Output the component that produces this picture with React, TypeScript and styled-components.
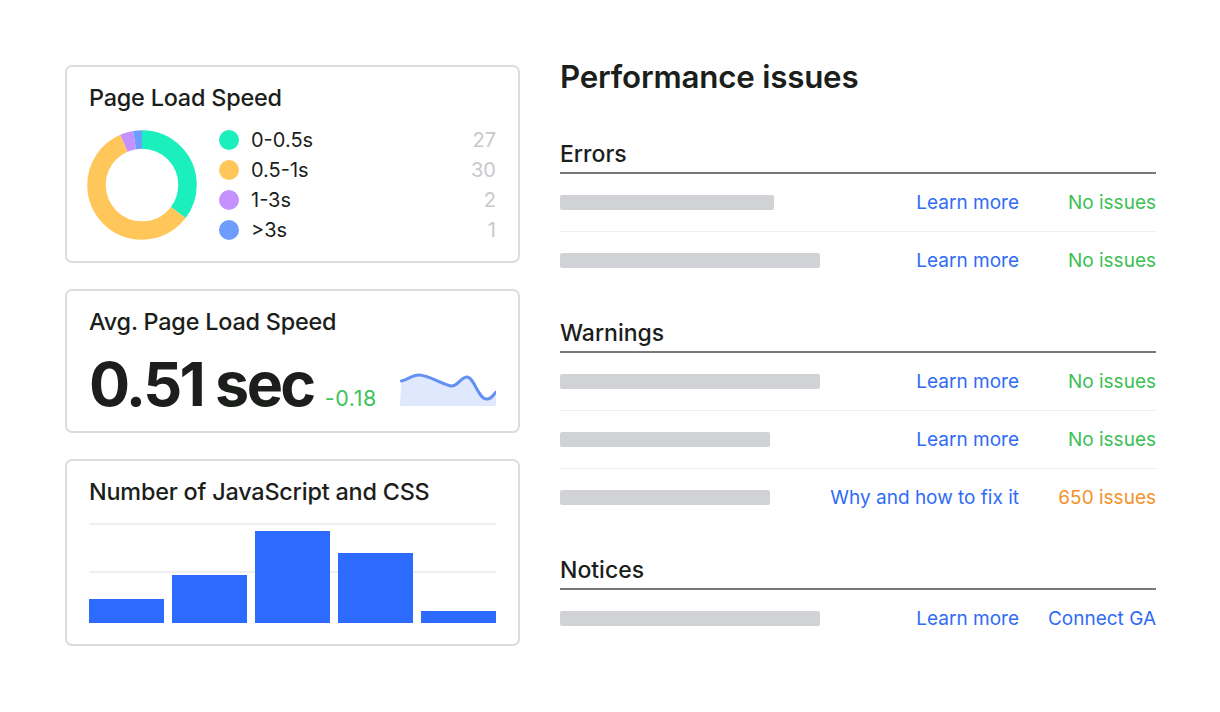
import React, { FC } from 'react';
import styled, { createGlobalStyle } from 'styled-components';

const GlobalStyle = createGlobalStyle`
  * { box-sizing: border-box; }
  body {
    margin: 0;
    background: #fff;
    font-family: Inter, "Noto Sans", "Liberation Sans", sans-serif;
    color: #1b1e1b;
  }
`;

const Page = styled.div`
  display: flex;
  align-items: flex-start;
  gap: 40px;
  padding: 65px 64px 0 65px;
`;

const LeftColumn = styled.div`
  width: 455px;
  display: flex;
  flex-direction: column;
  gap: 26px;
`;

const Card = styled.section<{ $bottom?: number }>`
  border: 2px solid #dcdcdf;
  border-radius: 7px;
  padding: 17px 22px ${(p) => p.$bottom ?? 17}px;
`;

const CardTitle = styled.h2`
  margin: 0;
  font-size: 23.4px;
  line-height: 28px;
  font-weight: 500;
  letter-spacing: -0.2px;
`;

const SpeedBody = styled.div`
  margin-top: 13px;
  height: 120px;
  display: flex;
  align-items: center;
  gap: 22px;
  margin-left: -2px;
`;

const Legend = styled.ul`
  flex: 1;
  margin: 0;
  padding: 0;
  list-style: none;
`;

const LegendRow = styled.li`
  height: 30px;
  display: flex;
  align-items: center;
  gap: 12px;
  font-size: 20px;
`;

const Dot = styled.span<{ $color: string }>`
  width: 20px;
  height: 20px;
  border-radius: 50%;
  background: ${(p) => p.$color};
`;

const LegendCount = styled.span`
  margin-left: auto;
  color: #c9c9cb;
`;

const ValueRow = styled.div`
  margin-top: 18px;
  height: 60px;
  display: flex;
  align-items: baseline;
`;

const BigValue = styled.span`
  font-size: 61px;
  line-height: 60px;
  font-weight: 700;
  letter-spacing: -2.6px;
`;

const Delta = styled.span`
  margin-left: 11px;
  font-size: 21.5px;
  font-weight: 400;
  letter-spacing: 0.6px;
  color: #3ec45c;
`;

const Spark = styled.svg`
  margin-left: auto;
  display: block;
`;

const Chart = styled.div`
  margin-top: 17px;
  height: 100px;
  display: flex;
  align-items: flex-end;
  gap: 8px;
  background:
    linear-gradient(#f0f0f2, #f0f0f2) 0 0 / 100% 2px no-repeat,
    linear-gradient(#f0f0f2, #f0f0f2) 0 48px / 100% 2px no-repeat;
`;

const Bar = styled.div`
  flex: 1;
  background: #2d6bff;
`;

const RightColumn = styled.div`
  flex: 1;
  display: flex;
  flex-direction: column;
  gap: 30px;
`;

const Title = styled.h1`
  margin: 0 0 21px;
  font-size: 31.3px;
  line-height: 24px;
  font-weight: 600;
  letter-spacing: -0.2px;
`;

const Section = styled.div``;

const SectionHeader = styled.h3`
  margin: 0;
  font-size: 23px;
  line-height: 28px;
  font-weight: 500;
  padding-bottom: 4px;
  border-bottom: 2px solid #77787a;
`;

const Row = styled.div`
  box-sizing: content-box;
  height: 57px;
  display: grid;
  grid-template-columns: 1fr auto 137px;
  align-items: center;
  border-bottom: 1px solid #efeff1;
  font-size: 19px;
  &:last-child {
    border-bottom: none;
  }
`;

const Placeholder = styled.div<{ $w: number }>`
  width: ${(p) => p.$w}px;
  height: 15px;
  border-radius: 2px;
  background: #d1d2d5;
`;

const Link = styled.a`
  color: #2f6cf6;
  text-decoration: none;
  text-align: right;
`;

const Status = styled.span<{ $tone: 'ok' | 'warn' | 'link' }>`
  text-align: right;
  color: ${(p) => (p.$tone === 'ok' ? '#3cbf55' : p.$tone === 'warn' ? '#f0932b' : '#2f6cf6')};
`;

const speeds = [
  { label: '0-0.5s', count: 27, color: '#1befbe' },
  { label: '0.5-1s', count: 30, color: '#ffc65a' },
  { label: '1-3s', count: 2, color: '#c491ff' },
  { label: '>3s', count: 1, color: '#6f9dff' },
];

// arc spans in degrees as drawn in the chart, clockwise from 12 o'clock
const arcs = [127, 209, 14, 10];

const Donut: FC = () => {
  const r = 45.5;
  const c = 2 * Math.PI * r;
  let acc = 0;
  return (
    <svg width="110" height="110" viewBox="0 0 110 110">
      <g transform="rotate(-90 55 55)">
        {speeds.map((d, i) => {
          const len = (arcs[i] / 360) * c;
          const el = (
            <circle
              key={d.label}
              cx="55"
              cy="55"
              r={r}
              fill="none"
              stroke={d.color}
              strokeWidth="18.5"
              strokeDasharray={`${len} ${c - len}`}
              strokeDashoffset={-acc}
            />
          );
          acc += len;
          return el;
        })}
      </g>
    </svg>
  );
};

const bars = [24, 48, 92, 70, 12];

type Issue = { w: number; link: string; status: string; tone: 'ok' | 'warn' | 'link' };

const sections: { name: string; rows: Issue[] }[] = [
  {
    name: 'Errors',
    rows: [
      { w: 214, link: 'Learn more', status: 'No issues', tone: 'ok' },
      { w: 260, link: 'Learn more', status: 'No issues', tone: 'ok' },
    ],
  },
  {
    name: 'Warnings',
    rows: [
      { w: 260, link: 'Learn more', status: 'No issues', tone: 'ok' },
      { w: 210, link: 'Learn more', status: 'No issues', tone: 'ok' },
      { w: 210, link: 'Why and how to fix it', status: '650 issues', tone: 'warn' },
    ],
  },
  {
    name: 'Notices',
    rows: [{ w: 260, link: 'Learn more', status: 'Connect GA', tone: 'link' }],
  },
];

const sparkLine = 'M1.5,9 C7,8 12,3 19,3 C28,3 42,12 51,14 C57,15 61,5 67,5 C74,5 78,26 86,27 C91,28 93,23 96,20';

export default function App() {
  return (
    <>
      <GlobalStyle />
      <Page>
        <LeftColumn>
          <Card $bottom={16}>
            <CardTitle>Page Load Speed</CardTitle>
            <SpeedBody>
              <Donut />
              <Legend>
                {speeds.map((d) => (
                  <LegendRow key={d.label}>
                    <Dot $color={d.color} />
                    {d.label}
                    <LegendCount>{d.count}</LegendCount>
                  </LegendRow>
                ))}
              </Legend>
            </SpeedBody>
          </Card>

          <Card>
            <CardTitle>Avg. Page Load Speed</CardTitle>
            <ValueRow>
              <BigValue>0.51 sec</BigValue>
              <Delta>-0.18</Delta>
              <Spark width="96" height="34" viewBox="0 0 96 34">
                <path d={`${sparkLine} L96,34 L0,34 Z`} fill="#dfe8fd" />
                <path d={sparkLine} fill="none" stroke="#6290f3" strokeWidth="3" strokeLinecap="round" />
              </Spark>
            </ValueRow>
          </Card>

          <Card $bottom={21}>
            <CardTitle>Number of JavaScript and CSS</CardTitle>
            <Chart>
              {bars.map((h, i) => (
                <Bar key={i} style={{ height: h }} />
              ))}
            </Chart>
          </Card>
        </LeftColumn>

        <RightColumn>
          <Title>Performance issues</Title>
          {sections.map((s) => (
            <Section key={s.name}>
              <SectionHeader>{s.name}</SectionHeader>
              {s.rows.map((r, i) => (
                <Row key={i}>
                  <Placeholder $w={r.w} />
                  <Link href="#">{r.link}</Link>
                  <Status $tone={r.tone}>{r.status}</Status>
                </Row>
              ))}
            </Section>
          ))}
        </RightColumn>
      </Page>
    </>
  );
}
